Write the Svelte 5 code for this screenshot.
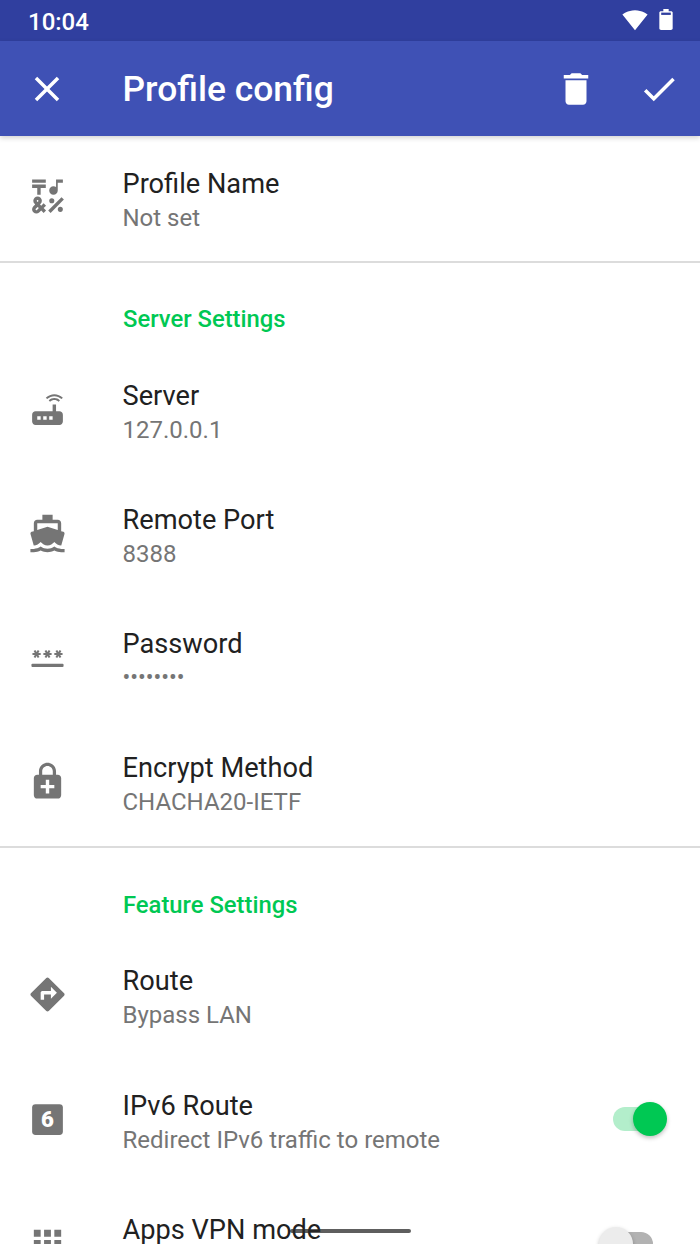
<script lang="ts">
  type Row = { id: string; title: string; summary: string; toggle?: boolean }

  const iconPaths: Record<string, string> = {
    name: "M3 2h8v2H3zM6 11h2V7h3V5H3v2h3zM12.404 20.182l7.778-7.778 1.414 1.414-7.778 7.778zM16 14.5a1.5 1.5 0 1 1-3 0 1.5 1.5 0 0 1 3 0zM21 19.5a1.5 1.5 0 1 1-3 0 1.5 1.5 0 0 1 3 0zM15.5 11c1.38 0 2.5-1.12 2.5-2.5V4h3V2h-4v4.51c-.42-.32-.93-.51-1.5-.51C14.12 6 13 7.12 13 8.5s1.12 2.5 2.5 2.5zM9.74 15.96l-1.41 1.41-.71-.71.35-.35c.98-.98.98-2.56 0-3.54-.49-.49-1.13-.73-1.77-.73-.64 0-1.28.24-1.77.73-.98.98-.98 2.56 0 3.54l.35.35-1.06 1.06c-.98.98-.98 2.56 0 3.54.5.5 1.14.74 1.78.74s1.28-.24 1.77-.73l1.06-1.06 1.41 1.41 1.41-1.41-1.41-1.41 1.41-1.41-1.41-1.38zM5.85 14.2c.12-.12.26-.15.35-.15s.23.03.35.15c.19.2.19.51 0 .71l-.35.35-.35-.36c-.2-.19-.2-.51 0-.7zm0 5.65c-.12.12-.26.15-.35.15s-.23-.03-.35-.15c-.2-.2-.2-.51 0-.71l1.06-1.06.71.71-1.07 1.06z",
    server: "M20.2 5.9l.8-.8C19.6 3.7 17.8 3 16 3s-3.6.7-5 2.1l.8.8C13 4.8 14.5 4.2 16 4.2s3 .6 4.2 1.7zm-.9.8c-.9-.9-2.1-1.4-3.3-1.4s-2.4.5-3.3 1.4l.8.8c.7-.7 1.6-1 2.5-1 .9 0 1.8.3 2.5 1l.8-.8zM19 13h-2V9h-2v4H5c-1.1 0-2 .9-2 2v4c0 1.1.9 2 2 2h14c1.1 0 2-.9 2-2v-4c0-1.1-.9-2-2-2zM8 18H6v-2h2v2zm3.5 0h-2v-2h2v2zm3.5 0h-2v-2h2v2z",
    port: "M20 21c-1.39 0-2.78-.47-4-1.32-2.44 1.71-5.56 1.71-8 0C6.78 20.53 5.39 21 4 21H2v2h2c1.38 0 2.74-.35 4-.99 2.52 1.29 5.48 1.29 8 0 1.26.65 2.62.99 4 .99h2v-2h-2zM3.95 19H4c1.6 0 3.02-.88 4-2 .98 1.12 2.4 2 4 2s3.02-.88 4-2c.98 1.12 2.4 2 4 2h.05l1.89-6.68c.08-.26.06-.54-.06-.78s-.34-.42-.6-.5L20 10.62V6c0-1.1-.9-2-2-2h-3V1H9v3H6c-1.1 0-2 .9-2 2v4.62l-1.29.42c-.26.08-.48.26-.6.5s-.15.52-.06.78L3.95 19zM6 6h12v3.97L12 8 6 9.97V6z",
    stars: "M3.15 12.95L4 11.47l.85 1.48 1.3-.75-.85-1.48H7v-1.5H5.3l.85-1.47L4.85 7 4 8.47 3.15 7l-1.3.75.85 1.47H1v1.5h1.7l-.85 1.48zM9.85 12.2l1.3.75.85-1.48.85 1.48 1.3-.75-.85-1.48H15v-1.5h-1.7l.85-1.47L12.85 7 12 8.47 11.15 7l-1.3.75.85 1.47H9v1.5h1.7zM23 9.22h-1.7l.85-1.47L20.85 7 20 8.47 19.15 7l-1.3.75.85 1.47H17v1.5h1.7l-.85 1.48 1.3.75.85-1.48.85 1.48 1.3-.75-.85-1.48H23z",
    method: "M18 8h-1V6c0-2.76-2.24-5-5-5S7 3.24 7 6v2H6c-1.1 0-2 .9-2 2v10c0 1.1.9 2 2 2h12c1.1 0 2-.9 2-2V10c0-1.1-.9-2-2-2zM8.9 6c0-1.71 1.39-3.1 3.1-3.1s3.1 1.39 3.1 3.1v2H8.9V6zM16 16h-3v3h-2v-3H8v-2h3v-3h2v3h3v2z",
    route: "M21.71 11.29l-9-9c-.39-.39-1.02-.39-1.41 0l-9 9c-.39.39-.39 1.02 0 1.41l9 9c.39.39 1.02.39 1.41 0l9-9c.39-.38.39-1.01 0-1.41zM14 14.5V12h-4v3H8v-4c0-.55.45-1 1-1h5V7.5l3.5 3.5-3.5 3.5z",
    apps: "M4 8h4V4H4v4zm6 12h4v-4h-4v4zm-6 0h4v-4H4v4zm0-6h4v-4H4v4zm6 0h4v-4h-4v4zm6-10v4h4V4h-4zm-6 4h4V4h-4v4zm6 6h4v-4h-4v4zm0 6h4v-4h-4v4z"
  }

  const serverRows: Row[] = [
    { id: "server", title: "Server", summary: "127.0.0.1" },
    { id: "port", title: "Remote Port", summary: "8388" },
    { id: "password", title: "Password", summary: "••••••••" },
    { id: "method", title: "Encrypt Method", summary: "CHACHA20-IETF" }
  ]

  // the last summary is below the fold
  const featureRows: Row[] = [
    { id: "route", title: "Route", summary: "Bypass LAN" },
    { id: "ipv6", title: "IPv6 Route", summary: "Redirect IPv6 traffic to remote", toggle: true },
    { id: "apps", title: "Apps VPN mode", summary: "", toggle: false }
  ]
</script>

{#snippet pref(row: Row)}
  <div class="row">
    <svg class="icon" viewBox="0 0 24 24" aria-hidden="true">
      {#if row.id === "ipv6"}
        <rect x="3" y="3" width="18" height="18" rx="2" />
        <text class="six" x="12" y="16.6">6</text>
      {:else if row.id === "password"}
        <path d={iconPaths.stars} transform="translate(12 10) scale(.8) translate(-12 -10)" />
        <rect x="2.6" y="15.7" width="18.8" height="1.9" rx=".6" />
      {:else}
        <path d={iconPaths[row.id]} />
      {/if}
    </svg>
    <div class="text">
      <div class="title">{row.title}</div>
      <div class="summary" class:dots={row.id === "password"}>{row.summary}</div>
    </div>
    {#if row.toggle !== undefined}
      <div class="switch" class:on={row.toggle}>
        <span class="track"></span>
        <span class="thumb"></span>
      </div>
    {/if}
  </div>
{/snippet}

<div class="screen">
  <div class="status">
    <span class="time">10:04</span>
    <div class="status-icons">
      <svg class="wifi" viewBox="0 0 24 24"><path d="M12.01 21.49L23.64 7c-.45-.34-4.93-4-11.64-4C5.28 3 .81 6.66.36 7l11.64 14.49z" /></svg>
      <svg class="battery" viewBox="0 0 24 24" preserveAspectRatio="none">
        <path d="M15.67 4H14V2h-4v2H8.33C7.6 4 7 4.6 7 5.33v15.33C7 21.4 7.6 22 8.33 22h7.33c.74 0 1.34-.6 1.34-1.33V5.33C17 4.6 16.4 4 15.67 4z" />
        <rect class="level" x="8.4" y="5.4" width="7.2" height="2.2" />
      </svg>
    </div>
  </div>

  <header class="toolbar">
    <svg class="tool close" viewBox="0 0 24 24"><path d="M19 6.41L17.59 5 12 10.59 6.41 5 5 6.41 10.59 12 5 17.59 6.41 19 12 13.41 17.59 19 19 17.59 13.41 12z" /></svg>
    <h1>Profile config</h1>
    <svg class="tool delete" viewBox="0 0 24 24"><path d="M6 19c0 1.1.9 2 2 2h8c1.1 0 2-.9 2-2V7H6v12zM19 4h-3.5l-1-1h-5l-1 1H5v2h14V4z" /></svg>
    <svg class="tool check" viewBox="0 0 24 24"><path d="M9 16.17L4.83 12l-1.42 1.41L9 19 21 7l-1.41-1.41z" /></svg>
  </header>

  <main>
    <section class="first">
      {@render pref({ id: "name", title: "Profile Name", summary: "Not set" })}
    </section>
    <section>
      <div class="category">Server Settings</div>
      {#each serverRows as row}
        {@render pref(row)}
      {/each}
    </section>
    <section class="last">
      <div class="category">Feature Settings</div>
      {#each featureRows as row}
        {@render pref(row)}
      {/each}
    </section>
  </main>

  <div class="nav-pill"></div>
</div>

<style>
  :global(body) {
    margin: 0;
    background: #fff;
  }

  .screen {
    position: relative;
    width: 700px;
    height: 1244px;
    overflow: hidden;
    background: #fff;
    font-family: Roboto, sans-serif;
  }

  .status {
    height: 41px;
    box-sizing: border-box;
    background: #303f9f;
    color: #fff;
    display: flex;
    align-items: center;
    justify-content: space-between;
    padding: 2px 18px 0 28px;
  }

  .time {
    font-size: 24px;
    font-weight: 500;
  }

  .status-icons {
    display: flex;
    align-items: center;
    margin-top: -4px;
  }

  .status-icons svg {
    fill: #fff;
  }

  .wifi {
    width: 26px;
    height: 26px;
    margin-right: 2px;
  }

  .battery {
    width: 32px;
    height: 25px;
  }

  .status-icons .level {
    fill: #303f9f;
  }

  .toolbar {
    position: relative;
    z-index: 1;
    height: 95px;
    box-sizing: border-box;
    background: #3f51b5;
    display: flex;
    align-items: center;
    padding: 0 20px 0 26px;
    box-shadow: 0 2px 5px rgba(0, 0, 0, 0.18);
  }

  .tool {
    width: 42px;
    height: 42px;
    fill: #fff;
    flex: none;
  }

  .toolbar h1 {
    margin: 2px 0 0 54.5px;
    flex: 1;
    color: #fff;
    font-size: 35.4px;
    font-weight: 500;
    line-height: 1;
  }

  .delete {
    margin-right: 41px;
  }

  section {
    border-bottom: 2px solid #dcdcdc;
  }

  section.last {
    border-bottom: 0;
  }

  .first .row {
    height: 125px;
  }

  .first .text {
    padding-top: 4px;
  }

  .category {
    height: 87px;
    padding: 42px 0 0 123px;
    box-sizing: border-box;
    color: #00c853;
    font-size: 23.8px;
    font-weight: 500;
    line-height: 28px;
  }

  .last .category {
    padding-top: 43px;
  }

  .row {
    height: 124px;
    display: flex;
    align-items: center;
    padding-left: 26.5px;
  }

  .last .row {
    height: 124.5px;
  }

  .icon {
    width: 41px;
    height: 41px;
    flex: none;
    fill: #757575;
    margin-bottom: 5px;
  }

  .six {
    fill: #fff;
    font-family: Roboto, sans-serif;
    font-size: 13px;
    font-weight: 900;
    text-anchor: middle;
  }

  .text {
    margin-left: 55px;
    flex: 1;
    min-width: 0;
    padding-top: 2px;
  }

  .title {
    color: #212121;
    font-size: 27.2px;
    line-height: 34px;
  }

  .summary {
    min-height: 34px;
    color: #757575;
    font-size: 24px;
    line-height: 34px;
  }

  .summary.dots {
    font-size: 23px;
  }

  .switch {
    position: relative;
    flex: none;
    width: 68px;
    height: 34px;
    margin-right: 33px;
    margin-bottom: 5px;
  }

  .track {
    position: absolute;
    left: 14px;
    right: 14px;
    top: 5px;
    height: 24px;
    border-radius: 12px;
    background: #b2b2b2;
  }

  .thumb {
    position: absolute;
    left: 0;
    top: 0;
    width: 34px;
    height: 34px;
    border-radius: 50%;
    background: #ececec;
    box-shadow: 0 2px 4px rgba(0, 0, 0, 0.25);
  }

  .switch.on .track {
    background: #b3eecb;
  }

  .switch.on .thumb {
    left: auto;
    right: 0;
    background: #00c853;
  }

  .nav-pill {
    position: absolute;
    left: 290px;
    top: 1229px;
    width: 121px;
    height: 4px;
    border-radius: 2px;
    background: rgba(40, 40, 40, 0.75);
  }
</style>
